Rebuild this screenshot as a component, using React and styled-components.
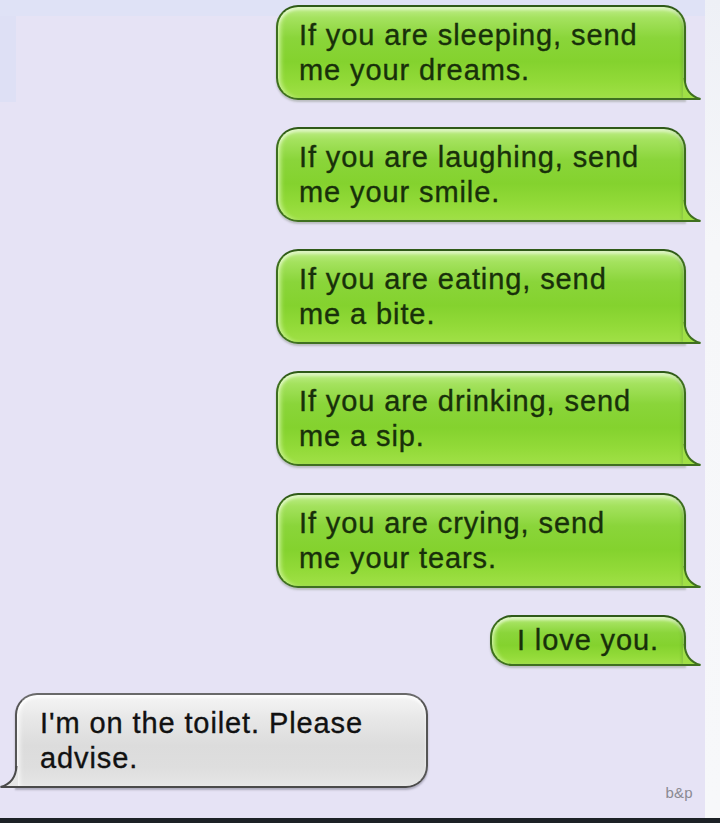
import React from "react";
import styled, { createGlobalStyle } from "styled-components";

const GlobalStyle = createGlobalStyle`
  html, body {
    margin: 0;
    padding: 0;
    background: #e6e3f5;
  }
  body {
    font-family: "Liberation Sans", Arial, sans-serif;
  }
`;

const messages = [
  { text: "If you are sleeping, send me your dreams.", width: 410 },
  { text: "If you are laughing, send me your smile.", width: 410 },
  { text: "If you are eating, send me a bite.", width: 410 },
  { text: "If you are drinking, send me a sip.", width: 410 },
  { text: "If you are crying, send me your tears.", width: 410 },
];

// the little flick at the bottom corner of each bubble
const Tail = ({ side }) => {
  const green = side === "right";
  const fill = green ? "#a0e046" : "#e6e6e6";
  const stroke = green ? "#3f7020" : "#4a4a4a";
  const flip = green ? undefined : "translate(18 0) scale(-1 1)";
  return (
    <TailSvg $side={side} width="18" height="22" viewBox="0 0 18 22">
      <g transform={flip}>
        <path d="M0 0 L1.5 0 C2 10 6 18 17.5 21 L0 21 Z" fill={fill} />
        <path d="M1.5 0 C2 10 6 18 17.5 21 L0 21" fill="none" stroke={stroke} strokeWidth="2" />
      </g>
    </TailSvg>
  );
};

const App = () => {
  return (
    <>
      <GlobalStyle />
      <Screen>
        <Page>
          <Thread>
            {messages.map((m, i) => (
              <SentBubble key={i} $width={m.width}>
                {m.text}
                <Tail side="right" />
              </SentBubble>
            ))}
            <SentBubble $width={196} $short>
              I love you.
              <Tail side="right" />
            </SentBubble>
            <ReplyRow>
              <ReplyBubble>
                I'm on the toilet. Please advise.
                <Tail side="left" />
              </ReplyBubble>
              <Credit>b&amp;p</Credit>
            </ReplyRow>
          </Thread>
          <Edge />
        </Page>
        <BottomBar />
      </Screen>
    </>
  );
};

export default App;

const Screen = styled.div`
  width: 720px;
  height: 823px;
  display: flex;
  flex-direction: column;
  overflow: hidden;
`;

const Page = styled.div`
  flex: 1;
  display: flex;
  background:
    linear-gradient(#dfe2f6, #dfe2f6) 0 0 / 100% 16px no-repeat,
    linear-gradient(#dee0f5, #dee0f5) 0 0 / 16px 102px no-repeat,
    #e6e3f5;
`;

const Thread = styled.div`
  flex: 1;
  display: flex;
  flex-direction: column;
  align-items: flex-end;
  gap: 27px;
  padding: 5px 19px 0 15px;
`;

const Edge = styled.div`
  width: 15px;
  background: linear-gradient(#eef0f6, #f6f7f9 30%, #f7f8fa);
`;

const BottomBar = styled.div`
  height: 5px;
  background: #1c2126;
`;

const BubbleBase = styled.div`
  position: relative;
  box-sizing: border-box;
  border: 2px solid;
  font-size: 29px;
  line-height: 35px;
  letter-spacing: 0.9px;
  -webkit-text-stroke: 0.35px currentColor;
`;

const SentBubble = styled(BubbleBase)`
  width: ${(p) => p.$width}px;
  padding: ${(p) => (p.$short ? "6px 20px 6px 20px" : "11px 30px 10px 21px")};
  border-radius: 22px 22px 0 22px;
  border-color: #3d6e1e;
  border-top-color: #2f5a18;
  border-bottom-color: #3f7020;
  color: #18300a;
  text-align: ${(p) => (p.$short ? "center" : "left")};
  background: linear-gradient(
    to bottom,
    #bfee8a 0%,
    #a4e25e 12%,
    #8ad53a 34%,
    #84d22e 60%,
    #92da38 82%,
    #a0e046 100%
  );
  box-shadow: inset 0 3px 3px rgba(255, 255, 255, 0.5),
    inset 5px 0 4px -2px rgba(215, 250, 170, 0.7),
    inset -3px 0 3px -1px rgba(60, 120, 20, 0.35),
    0 2px 2px rgba(60, 80, 40, 0.25);
`;

const ReplyRow = styled.div`
  align-self: stretch;
  display: flex;
  justify-content: space-between;
  align-items: flex-end;
`;

const ReplyBubble = styled(BubbleBase)`
  width: 413px;
  padding: 11px 20px 10px 23px;
  border-radius: 22px 22px 22px 0;
  border-color: #555;
  border-top-color: #6a6a6a;
  border-bottom-color: #4a4a4a;
  color: #111;
  background: linear-gradient(
    to bottom,
    #f5f5f5 0%,
    #e8e8e8 25%,
    #dcdcdc 55%,
    #dedede 80%,
    #e6e6e6 100%
  );
  box-shadow: inset 0 3px 3px rgba(255, 255, 255, 0.8),
    inset 5px 0 4px -2px rgba(255, 255, 255, 0.7),
    0 2px 2px rgba(40, 40, 60, 0.3);
`;

const TailSvg = styled.svg`
  position: absolute;
  bottom: -2px;
  ${(p) => (p.$side === "right" ? "right: -17px;" : "left: -17px;")}
`;

const Credit = styled.span`
  font-size: 15px;
  color: #8a8a92;
  margin-bottom: -13px;
  margin-right: -7px;
  letter-spacing: 0.3px;
`;
